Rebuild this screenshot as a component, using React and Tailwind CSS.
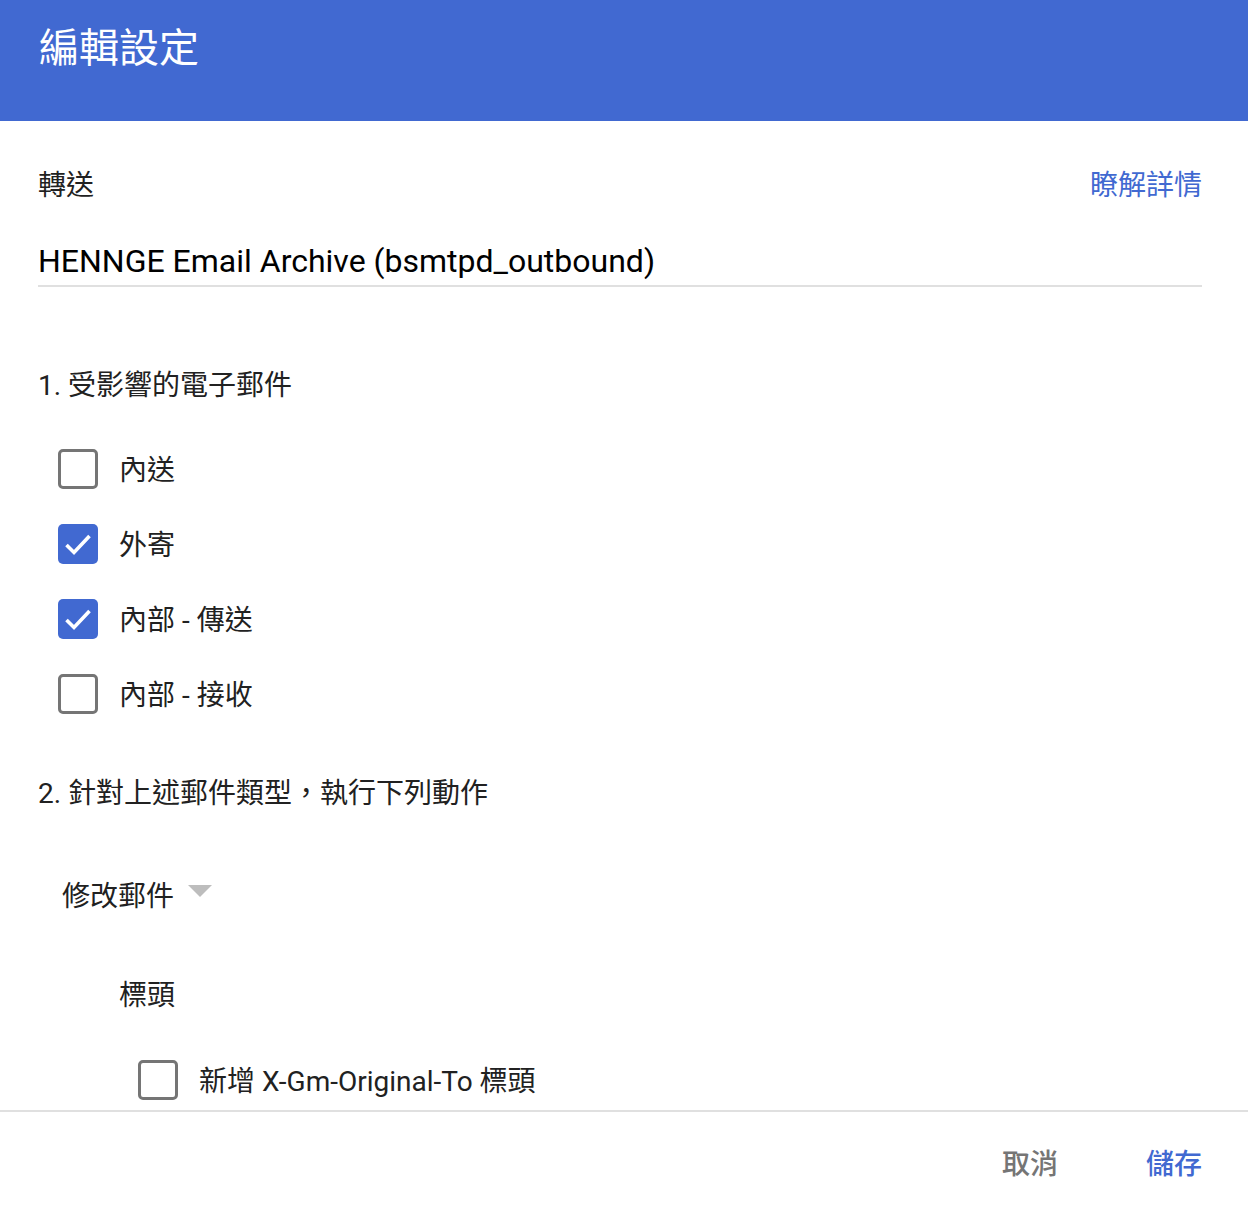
import React, { useState } from "react";

const FONT = { fontFamily: '"Roboto", "Noto Sans CJK TC", sans-serif' };

function Checkbox({ checked, onChange, label }) {
  return (
    <label className="flex items-center cursor-pointer" onClick={onChange}>
      {checked ? (
        <span className="w-[40px] h-[40px] rounded-[5px] bg-[#4169d1] flex items-center justify-center">
          <svg width="40" height="40" viewBox="0 0 40 40">
            <path d="M8.5 21 L16 28.5 L31.5 12" fill="none" stroke="#fff" strokeWidth="3.6" />
          </svg>
        </span>
      ) : (
        <span className="w-[40px] h-[40px] rounded-[5px] border-[3px] border-[#757575] bg-white" />
      )}
      <span className="ml-[21px] pt-[4px] text-[28px] leading-[40px] text-[#212121]">{label}</span>
    </label>
  );
}

export default function App() {
  const [types, setTypes] = useState({ inbound: false, outbound: true, internalSend: true, internalRecv: false });
  const [addHeader, setAddHeader] = useState(false);

  const toggle = (k) => setTypes({ ...types, [k]: !types[k] });

  return (
    <div className="w-[1248px] h-[1208px] bg-white flex flex-col overflow-hidden" style={FONT}>
      {/* Header */}
      <div className="h-[121px] bg-[#4169d1] pl-[39px] pt-[29px] shrink-0">
        <h1 className="text-[40px] leading-[40px] text-white">編輯設定</h1>
      </div>

      {/* Body */}
      <div className="h-[989px] overflow-hidden pl-[38px] pr-[46px]">
        <div className="mt-[43px] h-[40px] flex items-center justify-between">
          <span className="pt-[4px] text-[28px] text-[#212121]">轉送</span>
          <a className="pt-[4px] text-[28px] text-[#4169d1]">瞭解詳情</a>
        </div>

        <div className="mt-[37px] h-[46px] border-b-2 border-[#e0e0e0]">
          <div className="text-[32px] leading-[40px] text-black">HENNGE Email Archive (bsmtpd_outbound)</div>
        </div>

        <div className="mt-[77px] h-[40px] flex items-center">
          <span className="pt-[4px] text-[28px] text-[#212121]">1. 受影響的電子郵件</span>
        </div>

        <div className="mt-[27px] pl-[20px]">
          <div className="h-[75px] flex items-center">
            <Checkbox checked={types.inbound} onChange={() => toggle("inbound")} label="內送" />
          </div>
          <div className="h-[75px] flex items-center">
            <Checkbox checked={types.outbound} onChange={() => toggle("outbound")} label="外寄" />
          </div>
          <div className="h-[75px] flex items-center">
            <Checkbox checked={types.internalSend} onChange={() => toggle("internalSend")} label="內部 - 傳送" />
          </div>
          <div className="h-[75px] flex items-center">
            <Checkbox checked={types.internalRecv} onChange={() => toggle("internalRecv")} label="內部 - 接收" />
          </div>
        </div>

        <div className="mt-[41px] h-[40px] flex items-center">
          <span className="pt-[4px] text-[28px] text-[#212121]">2. 針對上述郵件類型，執行下列動作</span>
        </div>

        <div className="mt-[63px] h-[40px] flex items-center pl-[24px]">
          <span className="pt-[4px] text-[28px] text-[#212121]">修改郵件</span>
          <svg className="ml-[14px] -mt-[8px]" width="24" height="12" viewBox="0 0 24 12">
            <path d="M0 0 L24 0 L12 12 Z" fill="#bdbdbd" />
          </svg>
        </div>

        <div className="mt-[59px] h-[40px] flex items-center pl-[81px]">
          <span className="pt-[4px] text-[28px] text-[#212121]">標頭</span>
        </div>

        <div className="mt-[46px] h-[40px] flex items-center pl-[100px]">
          <Checkbox checked={addHeader} onChange={() => setAddHeader(!addHeader)} label="新增 X-Gm-Original-To 標頭" />
        </div>
      </div>

      {/* Footer */}
      <div className="flex-1 border-t-2 border-[#e0e0e0] flex items-center justify-end gap-[88px] pr-[46px] pt-[10px]">
        <button className="text-[28px] font-medium text-[#757575]">取消</button>
        <button className="text-[28px] font-medium text-[#4169d1]">儲存</button>
      </div>
    </div>
  );
}
